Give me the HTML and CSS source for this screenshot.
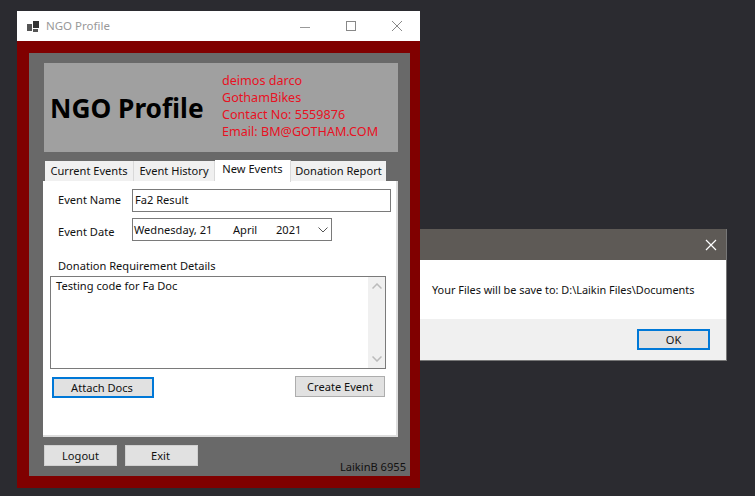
FILE: index.html
```html
<!DOCTYPE html>
<html lang="en">
<head>
  <meta charset="UTF-8">
  <title>NGO Profile</title>
  <link rel="stylesheet" href="styles.css">
</head>
<body>

<!-- main window -->
<div class="window main-window">
  <div class="titlebar">
    <svg class="app-icon" width="13" height="11" viewBox="0 0 13 11">
      <rect x="0" y="3" width="5" height="7" fill="#555"/>
      <rect x="6" y="0" width="6" height="7" fill="#333"/>
      <rect x="6" y="8" width="5" height="3" fill="#555"/>
    </svg>
    <span class="title-text">NGO Profile</span>
    <div class="caption-buttons">
      <svg width="12" height="12" viewBox="0 0 12 12"><path d="M1 7.5h10" stroke="#999" fill="none"/></svg>
      <svg width="12" height="12" viewBox="0 0 12 12"><rect x="1.5" y="1.5" width="9" height="9" stroke="#888" fill="none"/></svg>
      <svg width="12" height="12" viewBox="0 0 12 12"><path d="M1 1l10 10M11 1L1 11" stroke="#888" fill="none"/></svg>
    </div>
  </div>

  <div class="red-frame">
    <div class="panel">
      <div class="header">
        <h1>NGO Profile</h1>
        <div class="contact">
          <div>deimos darco</div>
          <div>GothamBikes</div>
          <div>Contact No: 5559876</div>
          <div>Email: BM@GOTHAM.COM</div>
        </div>
      </div>

      <div class="tabs">
        <div class="tab tab-1">Current Events</div>
        <div class="tab tab-2">Event History</div>
        <div class="tab tab-3 active">New Events</div>
        <div class="tab tab-4">Donation Report</div>
      </div>

      <div class="tab-page">
        <div class="row row-name">
          <label>Event Name</label>
          <div class="input">Fa2 Result</div>
        </div>
        <div class="row row-date">
          <label>Event Date</label>
          <div class="input date">
            <span class="d-day">Wednesday, 21</span>
            <span class="d-month">April</span>
            <span class="d-year">2021</span>
            <svg class="chevron" width="10" height="6" viewBox="0 0 10 6"><path d="M.5.5L5 5 9.5.5" stroke="#555" fill="none"/></svg>
          </div>
        </div>
        <div class="details-label">Donation Requirement Details</div>
        <div class="textarea">
          <div class="textarea-text">Testing code for Fa Doc</div>
          <div class="scrollbar">
            <svg width="10" height="6" viewBox="0 0 10 6"><path d="M.5 5.5L5 1l4.500 4.500" stroke="#bbb" stroke-width="1.500" fill="none"/></svg>
            <svg width="10" height="6" viewBox="0 0 10 6"><path d="M.5.5L5 5 9.500.5" stroke="#bbb" stroke-width="1.500" fill="none"/></svg>
          </div>
        </div>
        <div class="page-buttons">
          <button class="btn focused attach">Attach Docs</button>
          <button class="btn create">Create Event</button>
        </div>
      </div>

      <div class="bottom-row">
        <button class="btn bottom-btn">Logout</button>
        <button class="btn bottom-btn exit">Exit</button>
        <span class="user-tag">LaikinB 6955</span>
      </div>
    </div>
  </div>
</div>

<!-- message box -->
<div class="window dialog">
  <div class="dialog-title">
    <svg width="12" height="12" viewBox="0 0 12 12"><path d="M1 1l10 10M11 1L1 11" stroke="#fff" stroke-width="1.200" fill="none"/></svg>
  </div>
  <div class="dialog-body">Your Files will be save to: D:\Laikin Files\Documents</div>
  <div class="dialog-footer">
    <button class="btn focused ok">OK</button>
  </div>
</div>

</body>
</html>
```

FILE: styles.css
```css
* {
  box-sizing: border-box;
}

body {
  margin: 0;
  width: 755px;
  height: 496px;
  overflow: hidden;
  position: relative;
  background: #2b2b30;
  font-family: "Noto Sans", "Open Sans", sans-serif;
  font-size: 11.1px;
  color: #111;
}

.window {
  position: absolute;
}

.main-window {
  left: 17px;
  top: 11px;
  width: 403px;
  height: 477px;
  display: flex;
  flex-direction: column;
}

.titlebar {
  height: 30px;
  flex: none;
  background: #fff;
  display: flex;
  align-items: center;
  padding-left: 10px;
}

.title-text {
  margin: 0 0 2px 6px;
  color: #999;
  font-size: 11.5px;
}

.caption-buttons {
  margin-left: auto;
  margin-right: 17px;
  display: flex;
  gap: 34px;
}

.red-frame {
  flex: 1;
  background: #800000;
  padding: 12px 11px 12px 12px;
  display: flex;
}

.panel {
  flex: 1;
  background: #696969;
  padding: 10px 12px 0 14px;
}

.header {
  height: 89px;
  margin-left: 1px;
  background: #a0a0a0;
  display: flex;
  align-items: center;
}

.header h1 {
  margin: 0 0 0 6px;
  width: 172px;
  font-size: 26.300px;
  font-weight: 700;
  white-space: nowrap;
  color: #000;
}

.contact {
  color: #e81123;
  font-size: 12.6px;
  line-height: 17px;
  margin-top: -4px;
}

.tabs {
  margin: 8px 0 0 2px;
  height: 21px;
  display: flex;
  align-items: flex-end;
}

.tab {
  height: 20px;
  background: #f0f0f0;
  border-right: 1px solid #d9d9d9;
  text-align: center;
  line-height: 20px;
  white-space: nowrap;
}

.tab-1 { width: 89px; }
.tab-2 { width: 81px; }
.tab-3 { width: 76px; }
.tab-4 { width: 95px; border-right: 0; }

.tab.active {
  height: 22px;
  background: #fff;
  line-height: 18px;
  position: relative;
  margin-bottom: -1px;
}

.tab-page {
  width: 355px;
  height: 256px;
  background: #fff;
  border-right: 2px solid #ddd;
  border-bottom: 2px solid #ddd;
  padding: 8px 0 0 7px;
}

.row {
  display: flex;
  align-items: center;
  height: 23px;
}

.row label {
  width: 82px;
  padding-left: 8px;
  flex: none;
}

.row-name label {
  padding-bottom: 2px;
}

.row-date {
  margin-top: 6px;
}

.row-date label {
  padding-top: 4px;
}

.input {
  height: 23px;
  border: 1px solid #7a7a7a;
  padding-left: 2px;
  line-height: 19px;
  background: #fff;
}

.row-name .input {
  width: 259px;
}

.date {
  width: 200px;
  display: flex;
  align-items: center;
  padding-left: 1px;
}

.d-day { width: 99px; }
.d-month { width: 43px; }
.d-year { width: 32px; }

.chevron {
  margin-left: 10px;
}

.details-label {
  margin: 16px 0 0 8px;
  line-height: 18px;
}

.textarea {
  width: 336px;
  height: 93px;
  margin-top: 1px;
  border: 1px solid #7a7a7a;
  display: flex;
  justify-content: space-between;
}

.textarea-text {
  padding: 1px 0 0 5px;
}

.scrollbar {
  width: 17px;
  background: #f0f0f0;
  display: flex;
  flex-direction: column;
  justify-content: space-between;
  align-items: center;
  padding: 6px 0;
}

.page-buttons {
  display: flex;
  justify-content: space-between;
  align-items: flex-start;
  width: 333px;
  margin: 7px 0 0 2px;
}

.btn {
  display: block;
  padding: 0;
  font-family: inherit;
  font-size: 11.1px;
  color: #111;
  background: #e1e1e1;
  border: 1px solid #adadad;
  line-height: 1;
}

.btn.focused {
  border: 2px solid #0078d7;
}

.attach {
  width: 102px;
  height: 21px;
  margin-top: 1px;
  padding-right: 2px;
}

.create {
  width: 90px;
  height: 21px;
}

.bottom-row {
  display: flex;
  gap: 8px;
  margin: 8px 0 0 1px;
  position: relative;
}

.bottom-btn {
  width: 73px;
  height: 21px;
  border-color: #d0d0d0;
}

.exit {
  padding-right: 2px;
}

.user-tag {
  position: absolute;
  right: -8px;
  top: 14px;
  color: #111;
}

.dialog {
  left: 420px;
  top: 229px;
  width: 307px;
  height: 132px;
  display: flex;
  flex-direction: column;
  border-right: 1px solid #777;
}

.dialog-title {
  height: 31px;
  background: #5e5a56;
  display: flex;
  align-items: center;
  justify-content: flex-end;
  padding-right: 9px;
}

.dialog-body {
  height: 59px;
  background: #fff;
  padding: 20px 0 0 12px;
  font-size: 10.9px;
  line-height: 20px;
}

.dialog-footer {
  flex: 1;
  background: #f0f0f0;
  border-bottom: 1px solid #777;
  padding: 10px 16px 0 0;
  display: flex;
  justify-content: flex-end;
  align-items: flex-start;
}

.ok {
  width: 73px;
  height: 21px;
}
```
